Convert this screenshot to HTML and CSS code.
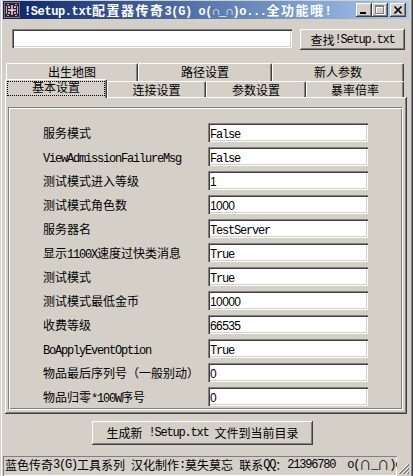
FILE: index.html
```html
<!DOCTYPE html>
<html lang="zh-CN">
<head>
<meta charset="utf-8">
<title>!Setup.txt配置器</title>
<link rel="stylesheet" href="styles.css">
</head>
<body>
<div class="window">
  <div class="titlebar">
    <svg class="app-icon" viewBox="0 0 16 16" width="16" height="16" shape-rendering="crispEdges">
      <rect x="0" y="0" width="16" height="16" fill="#7d6f82"/>
      <rect x="1" y="1" width="14" height="14" fill="#2b2030"/>
      <path d="M3 2h2v1H3zM11 2h2v1h-2zM2 4h1v8H2zM13 4h1v8h-1zM4 4h2v2H4zM10 4h2v2h-2zM7 3h2v10H7zM4 7h8v2H4zM4 10h2v2H4zM10 10h2v2h-2zM3 13h2v1H3zM11 13h2v1h-2z" fill="#c8a6bc"/>
      <path d="M5 5h1v1H5zM10 5h1v1h-1zM6 8h4v1H6z" fill="#e8d8e0"/>
    </svg>
    <div class="title"><span class="en">!Setup.txt</span>配置器传奇<span class="en">3(G) o(∩_∩)o...</span>全功能哦<span class="en">!</span></div>
    <div class="caption-buttons">
      <div class="cap">
        <svg viewBox="0 0 16 14" width="16" height="14" shape-rendering="crispEdges"><rect x="4" y="9" width="6" height="2" fill="#000"/></svg>
      </div>
      <div class="cap">
        <svg viewBox="0 0 16 14" width="16" height="14" shape-rendering="crispEdges">
          <path d="M4 3h9v9H4zM5 5v6h7V5z" fill="#fff" fill-rule="evenodd"/>
          <path d="M3 2h9v9H3zM4 4v6h7V4z" fill="#808080" fill-rule="evenodd"/>
        </svg>
      </div>
      <div class="cap close">
        <svg viewBox="0 0 16 14" width="16" height="14">
          <path d="M4.5 3.5l7 7M11.5 3.5l-7 7" stroke="#000" stroke-width="1.7" fill="none"/>
        </svg>
      </div>
    </div>
  </div>

  <div class="search-row">
    <div class="edit search-edit"></div>
    <div class="btn find-btn">查找<span class="en">!Setup.txt</span></div>
  </div>

  <div class="tabs">
    <div class="tab-row back">
      <div class="tab w132">出生地图</div>
      <div class="tab w134">路径设置</div>
      <div class="tab w132">新人参数</div>
    </div>
    <div class="tab-row front">
      <div class="tab selected"><div class="focus">基本设置</div></div>
      <div class="tab w99">连接设置</div>
      <div class="tab w100">参数设置</div>
      <div class="tab w98">暴率倍率</div>
    </div>
  </div>

  <div class="tab-panel">
    <div class="group">
      <div class="fields">
        <div class="label">服务模式</div>
        <div class="edit"><span class="en">False</span></div>
        <div class="label"><span class="en">ViewAdmissionFailureMsg</span></div>
        <div class="edit"><span class="en">False</span></div>
        <div class="label">测试模式进入等级</div>
        <div class="edit"><span class="num">1</span></div>
        <div class="label">测试模式角色数</div>
        <div class="edit"><span class="num">1000</span></div>
        <div class="label">服务器名</div>
        <div class="edit"><span class="en">TestServer</span></div>
        <div class="label">显示<span class="en">1100X</span>速度过快类消息</div>
        <div class="edit"><span class="en">True</span></div>
        <div class="label">测试模式</div>
        <div class="edit"><span class="en">True</span></div>
        <div class="label">测试模式最低金币</div>
        <div class="edit"><span class="num">10000</span></div>
        <div class="label">收费等级</div>
        <div class="edit"><span class="num">66535</span></div>
        <div class="label"><span class="en">BoApplyEventOption</span></div>
        <div class="edit"><span class="en">True</span></div>
        <div class="label">物品最后序列号（一般别动）</div>
        <div class="edit"><span class="num">0</span></div>
        <div class="label">物品归零<span class="en">*100W</span>序号</div>
        <div class="edit"><span class="num">0</span></div>
      </div>
    </div>
  </div>

  <div class="action-row">
    <div class="btn gen-btn">生成新<span class="en"> !Setup.txt </span>文件到当前目录</div>
  </div>

  <div class="statusbar">
    <div class="status-panel">蓝色传奇<span class="en">3(G)</span>工具系列<span class="en"> </span>汉化制作<span class="en">:</span>莫失莫忘<span class="en"> </span>联系<span class="en">QQ</span>：<span class="en">21396780  o(</span>∩<span class="en">_</span>∩<span class="en">)o</span></div>
    <svg class="grip" viewBox="0 0 12 14" width="12" height="14" shape-rendering="crispEdges">
      <path d="M11 2L1 12M11 6L5 12M11 10L9 12" stroke="#fff" stroke-width="1" fill="none"/>
      <path d="M12 2L2 12M12 3L3 12M12 6L6 12M12 7L7 12M12 10L10 12M12 11L11 12" stroke="#808080" stroke-width="1" fill="none"/>
    </svg>
  </div>
</div>
</body>
</html>
```

FILE: styles.css
```css
* {
  box-sizing: border-box;
}

html,
body {
  margin: 0;
  padding: 0;
}

body {
  width: 413px;
  height: 476px;
  overflow: hidden;
  background: #d4d0c8;
  font-family: "Noto Sans CJK SC", "Liberation Sans", sans-serif;
  font-size: 12px;
  line-height: 1;
  color: #000;
}

/* half-width latin runs, fixed 6px pitch */
.en {
  font-family: "Liberation Mono", "Noto Sans CJK SC", monospace;
  font-size: 12px;
  letter-spacing: -1.2px;
  white-space: pre;
}

.num {
  font-family: "Liberation Sans", "Noto Sans CJK SC", sans-serif;
  font-size: 12px;
  letter-spacing: -0.6px;
}

/* ---- window frame ---- */
.window {
  width: 413px;
  height: 476px;
  padding: 1px 4px 0 3px;
  display: flex;
  flex-direction: column;
  box-shadow: inset 1px 0 0 #d4d0c8, inset 2px 0 0 #fff,
    inset -1px 0 0 #404040, inset -2px 0 0 #808080;
}

.titlebar {
  flex: none;
  height: 18px;
  display: flex;
  align-items: center;
  padding: 0 3px 0 1px;
  background: linear-gradient(90deg, #0a246a 0%, #a6caf0 100%);
  color: #fff;
  font-weight: bold;
}

.app-icon {
  flex: none;
  display: block;
}

.title {
  flex: 1;
  margin-left: 4px;
  height: 18px;
  line-height: 18px;
  white-space: nowrap;
  overflow: hidden;
  font-size: 13px;
  letter-spacing: 1.5px;
}

.title .en {
  font-size: 12px;
  font-weight: bold;
  letter-spacing: -0.4px;
}

.caption-buttons {
  flex: none;
  display: flex;
}

.cap {
  width: 16px;
  height: 14px;
  background: #d4d0c8;
  box-shadow: inset -1px -1px 0 #404040, inset 1px 1px 0 #fff,
    inset -2px -2px 0 #808080;
}

.cap svg {
  display: block;
}

.cap.close {
  margin-left: 2px;
}

/* ---- common controls ---- */
.edit {
  height: 19px;
  line-height: 19px;
  padding-left: 2px;
  background: #fff;
  white-space: nowrap;
  overflow: hidden;
  box-shadow: inset 1px 1px 0 #808080, inset 2px 2px 0 #404040,
    inset -1px -1px 0 #fff, inset -2px -2px 0 #d4d0c8;
}

.btn {
  display: flex;
  align-items: center;
  justify-content: center;
  background: #d4d0c8;
  white-space: nowrap;
  box-shadow: inset -1px -1px 0 #404040, inset 1px 1px 0 #fff,
    inset -2px -2px 0 #808080;
}

/* ---- search row ---- */
.search-row {
  flex: none;
  display: flex;
  align-items: flex-start;
  height: 21px;
  margin: 10px 0 0 9px;
}

.search-edit {
  width: 280px;
}

.find-btn {
  width: 105px;
  height: 21px;
  margin-left: 8px;
}

/* ---- tabs ---- */
.tabs {
  flex: none;
  margin: 13px 0 0 2px;
}

.tab-row {
  display: flex;
}

.tab-row.back {
  height: 18px;
  padding-left: 1px;
}

.tab-row.front {
  height: 16px;
  align-items: flex-end;
}

.tab {
  display: flex;
  align-items: center;
  justify-content: center;
  height: 100%;
  background: #d4d0c8;
  border-top: 1px solid #fff;
  border-left: 1px solid #fff;
  border-right: 1px solid #404040;
  border-radius: 2px 2px 0 0;
  box-shadow: inset -1px 0 0 #808080;
  white-space: nowrap;
}

.tab-row.back .tab {
  padding-bottom: 1px;
}

.w132 { width: 132px; }
.w134 { width: 134px; }
.w100 { width: 100px; }
.w99 { width: 99px; }
.w98 { width: 98px; }

.tab.selected {
  position: relative;
  z-index: 1;
  width: 102px;
  height: 19px;
  margin-bottom: -1px;
  align-items: stretch;
  padding: 1px 1px 2px 1px;
}

.focus {
  flex: 1;
  display: flex;
  align-items: center;
  justify-content: center;
  padding-bottom: 3px;
  border: 1px dotted #000;
}

.tab-panel {
  flex: none;
  width: 402px;
  height: 317px;
  margin-left: 2px;
  padding: 10px 4px 4px 3px;
  box-shadow: inset -1px -1px 0 #404040, inset 1px 1px 0 #fff,
    inset -2px -2px 0 #808080;
}

.group {
  height: 303px;
  padding: 15px 0 0 34px;
  border: 1px solid;
  border-color: #808080 #fff #fff #808080;
  box-shadow: inset 1px 1px 0 #fff, inset -1px -1px 0 #808080;
}

.fields {
  display: grid;
  grid-template-columns: 165px 160px;
  grid-auto-rows: 19px;
  row-gap: 5px;
}

.label {
  line-height: 19px;
  white-space: nowrap;
}

/* ---- bottom ---- */
.action-row {
  flex: none;
  margin: 7px 0 0 89px;
}

.gen-btn {
  width: 221px;
  height: 24px;
}

.statusbar {
  flex: none;
  display: flex;
  height: 20px;
  margin-top: 11px;
}

.status-panel {
  width: 394px;
  flex: none;
  display: flex;
  align-items: center;
  padding: 0 0 3px 2px;
  overflow: hidden;
  white-space: nowrap;
  box-shadow: inset 1px 1px 0 #808080, inset -1px -1px 0 #fff;
}

.grip {
  flex: none;
  align-self: flex-end;
  display: block;
}
```
